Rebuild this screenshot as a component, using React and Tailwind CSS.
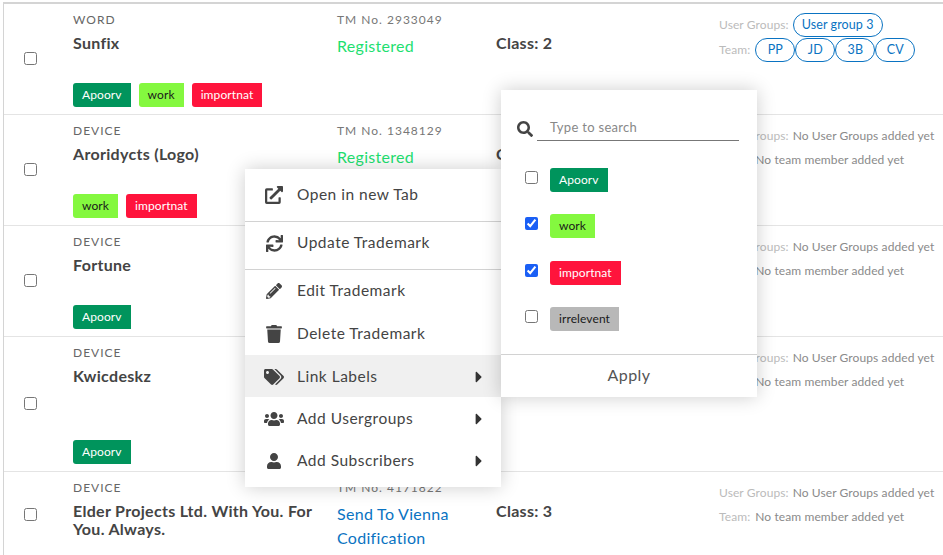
import {
  FaCaretRight,
  FaExternalLinkAlt,
  FaPencilAlt,
  FaSearch,
  FaSync,
  FaTags,
  FaTrash,
  FaUser,
  FaUsers,
} from "react-icons/fa";

const LABELS = {
  Apoorv: "bg-[#00945c] text-white",
  work: "bg-[#84f83f] text-[#1a1a1a]",
  importnat: "bg-[#ff143c] text-white",
  irrelevent: "bg-[#b8b8b8] text-[#1a1a1a]",
};

const ROWS = [
  {
    type: "WORD",
    name: "Sunfix",
    tm: "TM No. 2933049",
    status: "Registered",
    cls: "Class: 2",
    labels: ["Apoorv", "work", "importnat"],
    group: "User group 3",
    team: ["PP", "JD", "3B", "CV"],
    height: "h-[111px]",
  },
  {
    type: "DEVICE",
    name: "Aroridycts (Logo)",
    tm: "TM No. 1348129",
    status: "Registered",
    cls: "Class: 9",
    labels: ["work", "importnat"],
    height: "h-[111px]",
  },
  {
    type: "DEVICE",
    name: "Fortune",
    labels: ["Apoorv"],
    height: "h-[111px]",
  },
  {
    type: "DEVICE",
    name: "Kwicdeskz",
    labels: ["Apoorv"],
    height: "h-[135px]",
  },
  {
    type: "DEVICE",
    name: "Elder Projects Ltd. With You. For You. Always.",
    tm: "TM No. 4171822",
    status: "Send To Vienna Codification",
    cls: "Class: 3",
    labels: [],
    height: "h-[88px]",
    blue: true,
  },
];

function Label({ name }) {
  return (
    <span
      className={`inline-flex h-6 items-center rounded-l-[3px] px-[9px] text-[12px] tracking-[0.1px] ${LABELS[name]}`}
    >
      {name}
    </span>
  );
}

function Chip({ children, className = "" }) {
  return (
    <span
      className={`inline-flex h-6 items-center justify-center rounded-full border border-[#0a73c2] bg-white text-[12.5px] text-[#0a73c2] ${className}`}
    >
      {children}
    </span>
  );
}

function Row({ row }) {
  return (
    <div className={`flex border-b border-[#e4e4e4] ${row.height}`}>
      <div className="flex w-[69px] shrink-0 items-center pb-[2px] pl-[20px]">
        <input type="checkbox" className="h-[13px] w-[13px]" />
      </div>
      <div className="flex w-[264px] shrink-0 flex-col pr-5 pt-[8px]">
        <div className="text-[12px] leading-4 tracking-[1px] text-[#666]">
          {row.type}
        </div>
        <div className="mt-[6px] text-[16px] font-bold leading-[18px] tracking-[0.3px] text-[#444]">
          {row.name}
        </div>
        {row.labels.length > 0 && (
          <div className="mt-auto mb-[7px] flex gap-2">
            {row.labels.map((l) => (
              <Label key={l} name={l} />
            ))}
          </div>
        )}
      </div>
      <div className="w-[159px] shrink-0 pt-[8px]">
        <div className="text-[12px] leading-4 tracking-[1px] text-[#777]">
          {row.tm}
        </div>
        <div
          className={`mt-[6px] w-[130px] text-[16px] leading-6 tracking-[0.3px] ${
            row.blue ? "text-[#0a73c2]" : "text-[#1ee070]"
          }`}
        >
          {row.status}
        </div>
      </div>
      <div className="w-[223px] shrink-0 pt-[30px] text-[16px] font-bold leading-[18px] tracking-[0.3px] text-[#444]">
        {row.cls}
      </div>
      <div className="flex-1 pt-[9px] text-[12px] tracking-[0.1px]">
        {row.group ? (
          <div className="flex h-6 items-center gap-[4px]">
            <span className="text-[#bbb]">User Groups:</span>
            <Chip className="w-[90px]">{row.group}</Chip>
          </div>
        ) : (
          <div className="flex h-6 items-center gap-[4px]">
            <span className="text-[#bbb]">User Groups:</span>
            <span className="text-[#8a8a8a]">No User Groups added yet</span>
          </div>
        )}
        {row.team ? (
          <div className="mt-[1px] flex h-6 items-center gap-[5px]">
            <span className="text-[#bbb]">Team:</span>
            <div className="flex">
              {row.team.map((t) => (
                <Chip key={t} className="w-[40px]">
                  {t}
                </Chip>
              ))}
            </div>
          </div>
        ) : (
          <div className="flex h-6 items-center gap-[5px]">
            <span className="text-[#bbb]">Team:</span>
            <span className="text-[#8a8a8a]">No team member added yet</span>
          </div>
        )}
      </div>
    </div>
  );
}

function MenuItem({ icon: Icon, size = 18, label, caret, active, className = "" }) {
  return (
    <div
      className={`flex items-center pl-[19px] pr-[13px] text-[#444] ${
        active ? "bg-[#f0f0f0]" : ""
      } ${className}`}
    >
      <div className="flex w-[33px] shrink-0 justify-start">
        <div className="flex w-5 justify-center">
          <Icon size={size} className="text-[#444]" />
        </div>
      </div>
      <span className="flex-1 text-[15.5px] tracking-[0.5px]">{label}</span>
      {caret && <FaCaretRight size={18} className="text-[#333]" />}
    </div>
  );
}

function ContextMenu() {
  return (
    <div className="absolute left-[245px] top-[169px] w-[256px] bg-white shadow-[0_0_18px_rgba(0,0,0,0.2)]">
      <MenuItem icon={FaExternalLinkAlt} label="Open in new Tab" className="h-[53px] border-b border-[#d2d2d2]" />
      <MenuItem icon={FaSync} size={17} label="Update Trademark" className="h-[48px] border-b border-[#d2d2d2] pb-[5px]" />
      <MenuItem icon={FaPencilAlt} size={16} label="Edit Trademark" className="h-[42px]" />
      <MenuItem icon={FaTrash} size={18} label="Delete Trademark" className="h-[43px]" />
      <MenuItem icon={FaTags} size={20} label="Link Labels" caret active className="h-[42px] pt-[1px]" />
      <MenuItem icon={FaUsers} size={20} label="Add Usergroups" caret className="h-[42px] pt-[2px]" />
      <MenuItem icon={FaUser} size={16} label="Add Subscribers" caret className="h-[48px] pb-[4px]" />
    </div>
  );
}

function LabelPanel() {
  const options = [
    ["Apoorv", false, "mt-[27px]"],
    ["work", true, "mt-[22px]"],
    ["importnat", true, "mt-[23px]"],
    ["irrelevent", false, "mt-[22px]"],
  ];
  return (
    <div className="absolute left-[501px] top-[90px] flex h-[307px] w-[256px] flex-col bg-white shadow-[0_0_18px_rgba(0,0,0,0.2)]">
      <div className="flex items-center pl-4 pr-[18px] pt-[26px]">
        <FaSearch size={16} className="shrink-0 text-[#444]" />
        <div className="ml-1 flex h-[25px] flex-1 items-center border-b border-[#777] pl-[13px] text-[13px] tracking-[0.3px] text-[#888]">
          Type to search
        </div>
      </div>
      {options.map(([name, checked, mt]) => (
        <div key={name} className={`flex h-6 items-center pl-[24px] ${mt}`}>
          <input
            type="checkbox"
            defaultChecked={checked}
            className="h-[13px] w-[13px] -translate-y-[3px] accent-[#1a5ff5]"
          />
          <div className="ml-3 flex">
            <Label name={name} />
          </div>
        </div>
      ))}
      <div className="mt-auto flex h-[43px] items-center justify-center border-t border-[#d2d2d2] pb-[2px] text-[16px] tracking-[0.4px] text-[#555]">
        Apply
      </div>
    </div>
  );
}

export default function App() {
  return (
    <div className="relative h-[555px] w-[943px] overflow-hidden bg-white font-['Lato','Noto_Sans',sans-serif]">
      <div className="mt-[2px] ml-[3px] h-full border-l border-t-2 border-[#d4d4d4]">
        {ROWS.map((row) => (
          <Row key={row.name} row={row} />
        ))}
      </div>
      <ContextMenu />
      <LabelPanel />
    </div>
  );
}
